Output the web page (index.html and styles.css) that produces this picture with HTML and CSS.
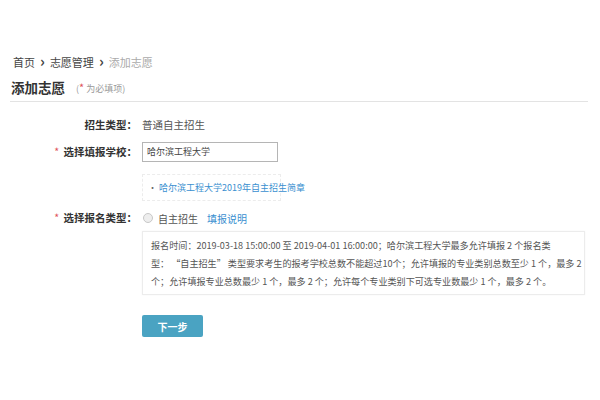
FILE: index.html
```html
<!DOCTYPE html>
<html lang="zh-CN">
<head>
<meta charset="utf-8">
<link rel="stylesheet" href="styles.css">
</head>
<body>
<div class="page">
  <div class="crumbs">
    <span class="crumb">首页</span>
    <span class="sep">›</span>
    <span class="crumb">志愿管理</span>
    <span class="sep">›</span>
    <span class="crumb current">添加志愿</span>
  </div>
  <div class="title-row">
    <h1 class="title">添加志愿</h1>
    <span class="note">(<span class="star">*</span> 为必填项)</span>
  </div>
  <div class="form">
    <div class="row row-type">
      <div class="label">招生类型：</div>
      <div class="value">普通自主招生</div>
    </div>
    <div class="row row-school">
      <div class="label"><span class="star">*</span> 选择填报学校：</div>
      <div class="field">
        <div class="input">哈尔滨工程大学</div>
        <div class="linkbox"><span class="dot">•</span> <a class="link">哈尔滨工程大学2019年自主招生简章</a></div>
      </div>
    </div>
    <div class="row row-kind">
      <div class="label"><span class="star">*</span> 选择报名类型：</div>
      <div class="field">
        <div class="radio-line">
          <span class="radio"></span>
          <span class="radio-text">自主招生</span>
          <a class="link help">填报说明</a>
        </div>
        <div class="info">报名时间：2019-03-18 15:00:00 至 2019-04-01 16:00:00；哈尔滨工程大学最多允许填报 2 个报名类<br>型：&nbsp;“自主招生”&nbsp;类型要求考生的报考学校总数不能超过10个；允许填报的专业类别总数至少 1 个，最多 2<br>个；允许填报专业总数最少 1 个，最多 2 个；允许每个专业类别下可选专业数最少 1 个，最多 2 个。</div>
      </div>
    </div>
    <div class="row row-btn">
      <div class="label"></div>
      <button class="btn">下一步</button>
    </div>
  </div>
</div>
</body>
</html>
```

FILE: styles.css
```css
html, body {
  margin: 0;
  padding: 0;
  background: #fff;
}
body {
  font-family: "Noto Sans CJK SC", "Microsoft YaHei", "Noto Sans", sans-serif;
  color: #333;
}
.page {
  padding: 53px 12px 0 10px;
}
.crumbs {
  display: flex;
  align-items: center;
  gap: 5px;
  padding-left: 3px;
  font-size: 11px;
  line-height: 18px;
  color: #444;
}
.sep {
  font-size: 15px;
  font-weight: bold;
  color: #444;
  line-height: 18px;
  margin-top: -2px;
}
.crumb.current {
  color: #aaa;
}
.title-row {
  display: flex;
  align-items: center;
  margin-top: 6px;
  padding-left: 1px;
  padding-bottom: 4px;
  border-bottom: 1px solid #e3e3e3;
}
.title {
  margin: 0;
  font-size: 13.5px;
  font-weight: bold;
  color: #333;
  line-height: 20px;
}
.note {
  margin-left: 11px;
  font-size: 9px;
  color: #999;
  margin-top: 2px;
}
.note .star {
  font-size: 11px;
  line-height: 9px;
}
.star {
  color: #e0535a;
}
.form {
  padding-top: 14px;
}
.row {
  display: flex;
  align-items: flex-start;
}
.label {
  width: 127px;
  flex: none;
  text-align: right;
  font-size: 10.5px;
  font-weight: bold;
  color: #333;
  line-height: 18px;
}
.label .star {
  font-weight: normal;
  margin-right: 2px;
}
.value {
  font-size: 10.5px;
  line-height: 18px;
  color: #555;
  margin-left: 5px;
}
.row-school {
  margin-top: 9px;
}
.field {
  display: flex;
  flex-direction: column;
  align-items: flex-start;
  margin-left: 5px;
}
.input {
  width: 130px;
  height: 18px;
  border: 1px solid #b5b5b5;
  padding: 0 0 0 4px;
  font-size: 9px;
  line-height: 18px;
  color: #444;
  margin-top: -1px;
}
.linkbox {
  margin-top: 12px;
  width: 132px;
  height: 25px;
  border: 1px dashed #ececec;
  padding-left: 5px;
  font-size: 9px;
  line-height: 25px;
  color: #555;
  white-space: nowrap;
}
.dot {
  color: #666;
}
.link {
  color: #3a8fd0;
}
.row-kind {
  margin-top: 8px;
}
.radio-line {
  display: flex;
  align-items: center;
  height: 18px;
  font-size: 10px;
  color: #555;
}
.radio {
  width: 8px;
  height: 8px;
  border: 1px solid #c8c8c8;
  border-radius: 50%;
  background: #eee;
  margin-left: 1px;
  margin-right: 5px;
}
.help {
  margin-left: 9px;
}
.info {
  margin-top: 4px;
  width: 433px;
  border: 1px solid #ececec;
  padding: 4px 0 4px 8px;
  font-size: 9.1px;
  line-height: 18px;
  color: #555;
  white-space: nowrap;
  box-shadow: 0 0 2px rgba(0,0,0,0.04);
}
.row-btn {
  margin-top: 20px;
}
.btn {
  margin-left: 5px;
  width: 61px;
  height: 22px;
  border: none;
  border-radius: 2px;
  background: #4aa3c2;
  color: #fff;
  font-family: inherit;
  font-size: 10px;
  font-weight: bold;
  padding: 0;
}
```
